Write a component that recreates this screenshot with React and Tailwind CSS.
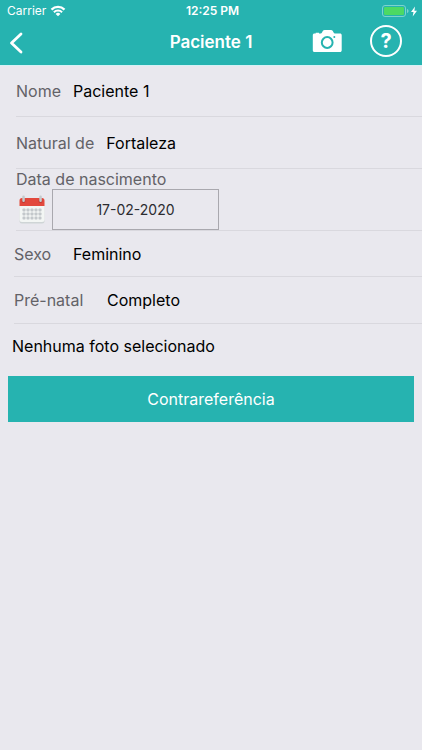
import { useState } from "react";

function StatusBar() {
  return (
    <div className="grid grid-cols-3 items-center h-[22px] pl-[7px] pr-1 text-[12px]">
      <div className="flex items-center gap-1">
        <span>Carrier</span>
        <svg width="16" height="12" viewBox="0 0 16 12" fill="none" aria-hidden="true">
          <path d="M1.500 4.600a9.300 9.300 0 0 1 13 0" stroke="white" strokeWidth="2.300" />
          <path d="M3.900 7.200a5.900 5.900 0 0 1 8.200 0" stroke="white" strokeWidth="2" />
          <path d="M8 11.300 5.600 9a3.400 3.400 0 0 1 4.800 0z" fill="white" />
        </svg>
      </div>
      <span className="text-center font-semibold">12:25 PM</span>
      <div className="flex items-center justify-end gap-px">
        <svg width="27" height="12" viewBox="0 0 27 12" aria-hidden="true">
          <rect x="0.5" y="0.5" width="23" height="11" rx="2.5" fill="none" stroke="#7dd3ce" />
          <rect x="2" y="2" width="20" height="8" rx="1.2" fill="#4cd964" />
          <path d="M25 4v4c1-.4 1.5-1.1 1.5-2S26 4.400 25 4z" fill="#7dd3ce" />
        </svg>
        <svg width="8" height="11" viewBox="0 0 8 11" aria-hidden="true">
          <path d="M5 .5 1 6h2.500L2.700 10.500 7 4.700H4.400z" fill="white" />
        </svg>
      </div>
    </div>
  );
}

function NavBar() {
  return (
    <div className="grid grid-cols-[1fr_auto_1fr] items-center h-[43px] px-2 pb-[2px]">
      <button type="button" aria-label="Voltar" className="w-8 h-8 flex items-center">
        <svg width="16" height="22" viewBox="0 0 16 22" fill="none" aria-hidden="true">
          <path
            d="M13 2 3.500 11 13 20"
            stroke="white"
            strokeWidth="2.8"
            strokeLinecap="round"
            strokeLinejoin="round"
          />
        </svg>
      </button>
      <h1 className="text-[17px] font-semibold">Paciente 1</h1>
      <div className="flex items-center justify-end gap-7 mr-3 mb-1">
        <button type="button" aria-label="Foto">
          <svg width="30" height="24" viewBox="0 0 30 24" aria-hidden="true">
            <path
              d="M2.500 4.500h1.200v-.7h3.300v.7H8.700c.6 0 1-.3 1.300-.9l.8-1.500c.4-.7 1-1.100 1.900-1.100h6.200c.9 0 1.500.4 1.900 1.100l.8 1.500c.3.6.7.9 1.400.9h5c1 0 1.700.7 1.700 1.700v15c0 1-.7 1.800-1.700 1.800H2.500c-1 0-1.700-.8-1.700-1.800v-15C.8 5.200 1.500 4.500 2.500 4.500z"
              fill="white"
            />
            <circle cx="15.200" cy="13.500" r="5.400" fill="none" stroke="#26b3b0" strokeWidth="2" />
            <circle cx="22.300" cy="8" r="1" fill="#26b3b0" />
          </svg>
        </button>
        <button
          type="button"
          aria-label="Ajuda"
          className="w-8 h-8 rounded-full border-2 border-white text-[20px] leading-none font-bold"
        >
          ?
        </button>
      </div>
    </div>
  );
}

function CalendarIcon() {
  const columns = [6, 10, 14, 18, 22];
  const rows = [14, 18, 22];

  return (
    <svg width="28" height="30" viewBox="0 0 28 30" aria-hidden="true">
      <rect x="1.500" y="4" width="25" height="24.500" rx="2.500" fill="#cfd5d6" />
      <rect x="1.500" y="3" width="25" height="24" rx="2.500" fill="#f3f6f4" />
      <path d="M1.500 11V5.500A2.500 2.500 0 0 1 4 3h20a2.500 2.500 0 0 1 2.500 2.500V11z" fill="#e2483d" />
      {rows.map((y) =>
        columns.map((x) => (
          <rect key={`${x}-${y}`} x={x - 1.5} y={y - 0.5} width="3" height="3" rx="0.800" fill="#c3c8cb" />
        ))
      )}
      <circle cx="5.500" cy="6" r="2" fill="#c03a32" />
      <circle cx="22.500" cy="6" r="2" fill="#c03a32" />
      <rect x="4.300" y="0.500" width="2.500" height="6.500" rx="1.200" fill="#c5cacc" />
      <rect x="21.300" y="0.500" width="2.500" height="6.500" rx="1.200" fill="#c5cacc" />
    </svg>
  );
}

function App() {
  const [formData, setFormData] = useState({
    nome: "Paciente 1",
    naturalDe: "Fortaleza",
    nascimento: "17-02-2020",
    sexo: "Feminino",
    preNatal: "Completo",
  });

  const handleChange = (e) => {
    setFormData({
      ...formData,
      [e.target.name]: e.target.value,
    });
  };

  return (
    <div className="min-h-screen bg-[#e9e8ee] font-[Inter,sans-serif] text-[16px] text-black">
      <header className="bg-[#26b3b0] text-white border-b border-[#d5f1f5]">
        <StatusBar />
        <NavBar />
      </header>

      <form onSubmit={(e) => e.preventDefault()}>
        <div className="ml-4 h-[51px] flex items-center gap-3 border-b border-[#d9d8de]">
          <label htmlFor="nome" className="text-[#636267]">
            Nome
          </label>
          <input
            id="nome"
            name="nome"
            value={formData.nome}
            onChange={handleChange}
            className="flex-1 min-w-0 bg-transparent outline-none"
          />
        </div>

        <div className="ml-4 h-[52px] flex items-center gap-3 border-b border-[#d9d8de]">
          <label htmlFor="naturalDe" className="text-[#636267]">
            Natural de
          </label>
          <input
            id="naturalDe"
            name="naturalDe"
            value={formData.naturalDe}
            onChange={handleChange}
            className="flex-1 min-w-0 bg-transparent outline-none"
          />
        </div>

        <div className="ml-4 border-b border-[#d9d8de]">
          <label htmlFor="nascimento" className="block leading-5 text-[#636267]">
            Data de nascimento
          </label>
          <div className="flex items-center gap-[6px] pl-[2px]">
            <button type="button" aria-label="Abrir calendário">
              <CalendarIcon />
            </button>
            <input
              id="nascimento"
              name="nascimento"
              value={formData.nascimento}
              onChange={handleChange}
              className="w-[167px] h-[41px] border border-[#a9a8ae] bg-transparent text-center text-[14px] text-[#2c2c30] outline-none"
            />
          </div>
        </div>

        <div className="ml-[14px] h-[46px] flex items-center border-b border-[#d9d8de]">
          <label htmlFor="sexo" className="w-[59px] text-[#636267]">
            Sexo
          </label>
          <select
            id="sexo"
            name="sexo"
            value={formData.sexo}
            onChange={handleChange}
            className="flex-1 appearance-none bg-transparent outline-none"
          >
            <option>Feminino</option>
            <option>Masculino</option>
          </select>
        </div>

        <div className="ml-[14px] h-[47px] flex items-center border-b border-[#d9d8de]">
          <label htmlFor="preNatal" className="w-[93px] text-[#636267]">
            Pré-natal
          </label>
          <select
            id="preNatal"
            name="preNatal"
            value={formData.preNatal}
            onChange={handleChange}
            className="flex-1 appearance-none bg-transparent outline-none"
          >
            <option>Completo</option>
            <option>Incompleto</option>
          </select>
        </div>

        <p className="px-3 py-[10px] leading-6">Nenhuma foto selecionado</p>

        <div className="px-2 pt-2">
          <button type="submit" className="w-full h-[46px] bg-[#26b3b0] text-white">
            Contrareferência
          </button>
        </div>
      </form>
    </div>
  );
}

export default App;
